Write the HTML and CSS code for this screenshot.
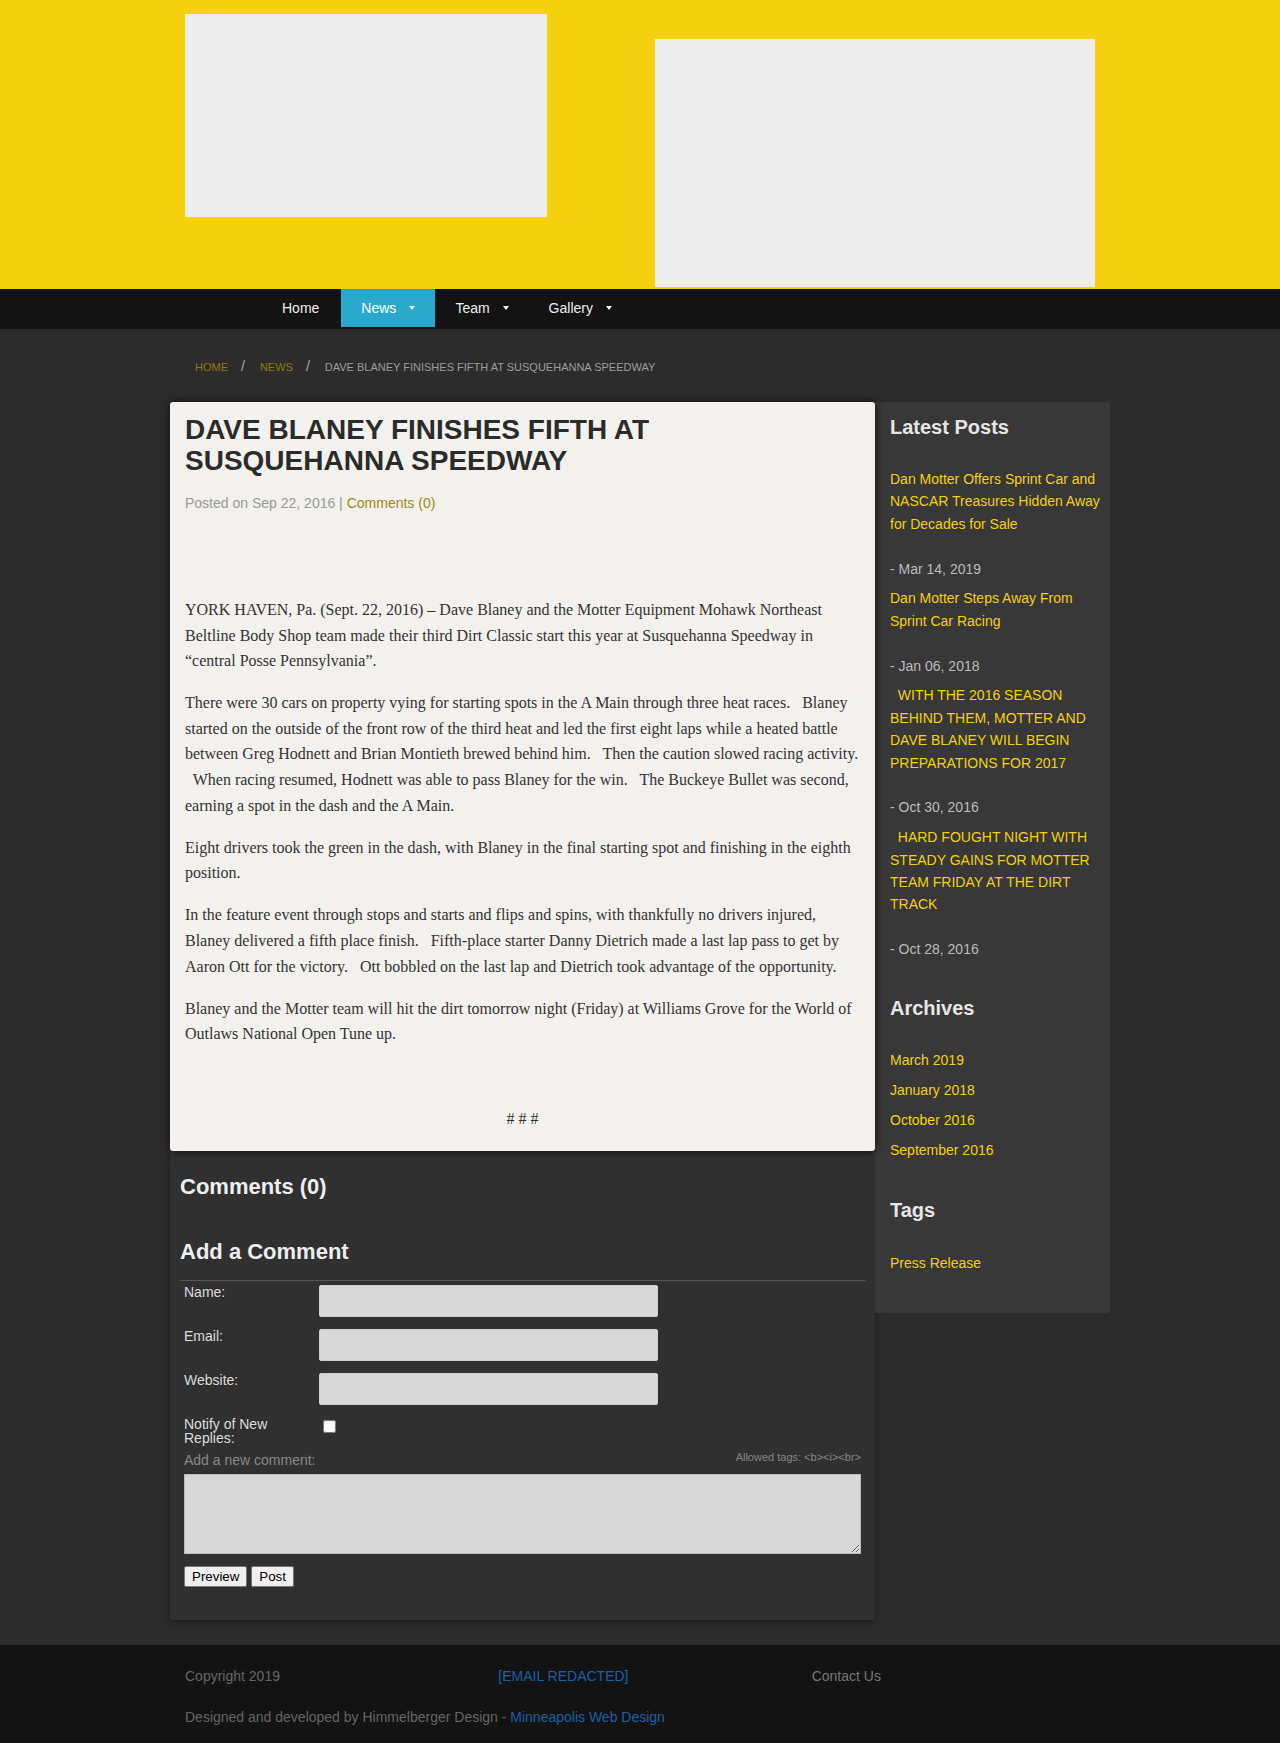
FILE: index.html
```html
<!DOCTYPE html>
<html lang="en">
<head>
<meta charset="utf-8">
<title>Dave Blaney Finishes Fifth at Susquehanna Speedway</title>
<link rel="stylesheet" href="styles.css">
</head>
<body>
<header class="site-header">
  <div class="container header-inner">
    <div class="logo-box"></div>
    <div class="banner-box"></div>
  </div>
</header>
<nav class="mainnav">
  <div class="container">
    <ul class="nav-list">
      <li><a href="#">Home</a></li>
      <li class="active"><a href="#">News<span class="caret"></span></a></li>
      <li><a href="#">Team<span class="caret"></span></a></li>
      <li><a href="#">Gallery<span class="caret"></span></a></li>
    </ul>
  </div>
</nav>
<div class="container crumbs">
  <a href="#">Home</a><span class="sep">/</span><a href="#">News</a><span class="sep">/</span><span class="current">Dave Blaney Finishes Fifth at Susquehanna Speedway</span>
</div>
<div class="container page-row">
  <main class="main-col">
    <article class="post-card">
      <h1 class="post-title">DAVE BLANEY FINISHES FIFTH AT SUSQUEHANNA SPEEDWAY</h1>
      <p class="post-meta">Posted on Sep 22, 2016 | <a href="#">Comments (0)</a></p>
      <div class="post-body">
        <p>YORK HAVEN, Pa. (Sept. 22, 2016) – Dave Blaney and the Motter Equipment Mohawk Northeast Beltline Body Shop team made their third Dirt Classic start this year at Susquehanna Speedway in “central Posse Pennsylvania”.</p>
        <p>There were 30 cars on property vying for starting spots in the A Main through three heat races. &nbsp; Blaney started on the outside of the front row of the third heat and led the first eight laps while a heated battle between Greg Hodnett and Brian Montieth brewed behind him. &nbsp; Then the caution slowed racing activity. &nbsp; When racing resumed, Hodnett was able to pass Blaney for the win. &nbsp; The Buckeye Bullet was second, earning a spot in the dash and the A Main.</p>
        <p>Eight drivers took the green in the dash, with Blaney in the final starting spot and finishing in the eighth position.</p>
        <p>In the feature event through stops and starts and flips and spins, with thankfully no drivers injured, Blaney delivered a fifth place finish. &nbsp; Fifth-place starter Danny Dietrich made a last lap pass to get by Aaron Ott for the victory. &nbsp; Ott bobbled on the last lap and Dietrich took advantage of the opportunity.</p>
        <p>Blaney and the Motter team will hit the dirt tomorrow night (Friday) at Williams Grove for the World of Outlaws National Open Tune up.</p>
        <p>&nbsp;</p>
        <p class="center"># # #</p>
      </div>
    </article>
    <section class="comments-box">
      <h3 class="comments-title">Comments (0)</h3>
      <h3 class="add-title">Add a Comment</h3>
      <hr class="form-rule">
      <table class="comment-form">
        <tr>
          <td class="lbl">Name:</td>
          <td><input type="text" class="field"></td>
        </tr>
        <tr>
          <td class="lbl">Email:</td>
          <td><input type="text" class="field"></td>
        </tr>
        <tr>
          <td class="lbl">Website:</td>
          <td><input type="text" class="field"></td>
        </tr>
        <tr>
          <td class="lbl">Notify of New Replies:</td>
          <td><input type="checkbox" class="check"></td>
        </tr>
        <tr>
          <td colspan="2" class="full">
            <span class="allowed">Allowed tags: &lt;b&gt;&lt;i&gt;&lt;br&gt;</span>
            <span class="new-lbl">Add a new comment:</span>
            <textarea class="comment-text"></textarea>
          </td>
        </tr>
        <tr>
          <td colspan="2" class="buttons">
            <button type="button" class="btn">Preview</button>
            <button type="button" class="btn">Post</button>
          </td>
        </tr>
      </table>
    </section>
  </main>
  <aside class="sidebar">
    <div class="widget">
      <h3 class="widget-title">Latest Posts</h3>
      <div class="post-item"><a href="#">Dan Motter Offers Sprint Car and NASCAR Treasures Hidden Away for Decades for Sale</a><br><br><span class="date">- Mar 14, 2019</span></div>
      <div class="post-item"><a href="#">Dan Motter Steps Away From Sprint Car Racing</a><br><br><span class="date">- Jan 06, 2018</span></div>
      <div class="post-item"><a href="#">&nbsp; WITH THE 2016 SEASON BEHIND THEM, MOTTER AND DAVE BLANEY WILL BEGIN PREPARATIONS FOR 2017</a><br><br><span class="date">- Oct 30, 2016</span></div>
      <div class="post-item"><a href="#">&nbsp; HARD FOUGHT NIGHT WITH STEADY GAINS FOR MOTTER TEAM FRIDAY AT THE DIRT TRACK</a><br><br><span class="date">- Oct 28, 2016</span></div>
    </div>
    <div class="widget">
      <h3 class="widget-title">Archives</h3>
      <div class="post-item"><a href="#">March 2019</a></div>
      <div class="post-item"><a href="#">January 2018</a></div>
      <div class="post-item"><a href="#">October 2016</a></div>
      <div class="post-item"><a href="#">September 2016</a></div>
    </div>
    <div class="widget widget-tags">
      <h3 class="widget-title">Tags</h3>
      <div class="post-item"><a href="#">Press Release</a></div>
    </div>
  </aside>
</div>
<footer class="site-footer">
  <div class="container footer-grid">
    <div class="fcol">Copyright 2019</div>
    <div class="fcol"><a href="#" class="flink">[EMAIL REDACTED]</a></div>
    <div class="fcol fcontact">Contact Us</div>
  </div>
  <div class="container footer-credit">
    Designed and developed by Himmelberger Design - <a href="#" class="flink">Minneapolis Web Design</a>
  </div>
</footer>
</body>
</html>
```

FILE: styles.css
```css
* { box-sizing: border-box; }

body {
  margin: 0;
  background: #2c2c2c;
  font-family: "Liberation Sans", Arial, sans-serif;
  font-size: 14px;
  color: #ddd;
}

a { text-decoration: none; }

.container {
  width: 940px;
  margin: 0 auto;
}

/* Header */
.site-header {
  background: #f6d10f;
  height: 289px;
}
.header-inner {
  display: flex;
  justify-content: space-between;
  padding: 0 15px;
}
.logo-box {
  margin-top: 14px;
  width: 362px;
  height: 203px;
  background: #ededed;
}
.banner-box {
  margin-top: 39px;
  width: 440px;
  height: 248px;
  background: #ededed;
}

/* Nav */
.mainnav {
  background: #131313;
  height: 40px;
}
.nav-list {
  list-style: none;
  margin: 0;
  padding: 0 0 0 92px;
  display: flex;
}
.nav-list a {
  display: flex;
  align-items: center;
  height: 38px;
  padding: 0 20px;
  color: #eee;
  font-size: 14px;
}
.nav-list li:first-child a { padding-right: 22px; }
.nav-list .active a { background: #29a7cc; color: #fff; }
.caret {
  display: inline-block;
  width: 0;
  height: 0;
  margin-left: 13px;
  border-left: 3.5px solid transparent;
  border-right: 3.5px solid transparent;
  border-top: 4px solid #fff;
}

/* Breadcrumbs */
.crumbs {
  padding: 29px 0 27px 25px;
  line-height: 16px;
  font-size: 11px;
  text-transform: uppercase;
}
.crumbs a { color: #8f7a10; }
.crumbs .sep {
  color: #aaa;
  font-size: 14px;
  padding: 0 15px 0 13px;
}
.crumbs .current { color: #9c9c9c; }

/* Layout */
.page-row {
  display: flex;
  align-items: flex-start;
}
.main-col { width: 705px; }
.sidebar {
  width: 235px;
  background: #383838;
  border-radius: 0 3px 3px 0;
  padding: 14px 10px 3px 15px;
}

/* Post card */
.post-card {
  position: relative;
  z-index: 1;
  background: #f2f1ed;
  border-radius: 3px;
  box-shadow: 0 0 8px rgba(0, 0, 0, 0.7);
  padding: 13px 15px 3px;
}
.post-title {
  margin: 0 0 17px;
  font-size: 28px;
  line-height: 30.5px;
  font-weight: bold;
  color: #2b2b2b;
}
.post-meta {
  margin: 0 0 84px;
  line-height: 20px;
  font-size: 14px;
  color: #999;
}
.post-meta a { color: #a08a12; }
.post-body p {
  margin: 0 0 16.5px;
  font-family: "Liberation Serif", "Times New Roman", serif;
  font-size: 16px;
  line-height: 25.6px;
  color: #333;
}
.post-body .center { text-align: center; }

/* Comments */
.comments-box {
  background: #303030;
  border-radius: 0 0 3px 3px;
  box-shadow: 0 2px 6px rgba(0, 0, 0, 0.35);
  padding: 0 10px 29px;
}
.comments-title,
.add-title {
  margin: 0;
  font-size: 22px;
  line-height: 22px;
  color: #eee;
}
.comments-title { padding-top: 25px; }
.add-title { margin-top: 43.7px; }
.form-rule {
  margin: 16.6px 0 0;
  border: 0;
  border-top: 1px solid #555;
  height: 0;
}
.comment-form {
  width: 100%;
  border-collapse: collapse;
}
.comment-form td {
  padding: 4px;
  vertical-align: top;
  font-size: 14px;
  line-height: 14px;
  color: #ddd;
}
.comment-form td.lbl { width: 135px; }
.field {
  display: block;
  width: 339px;
  height: 32px;
  margin: 0 0 4px;
  border: 1px solid #cfcfcf;
  border-radius: 2px;
  background: #d8d8d8;
}
.check {
  width: 13px;
  height: 13px;
  margin: 3px 3px 3px 4px;
}
.new-lbl { color: #888; }
.allowed {
  float: right;
  font-size: 11px;
  line-height: 8px;
  color: #888;
}
.comment-text {
  display: block;
  width: 677px;
  height: 80px;
  margin-top: 7px;
  border: 1px solid #bbb;
  background: #d8d8d8;
  resize: both;
}
.comment-form td.buttons { padding-top: 8px; }
.btn {
  font-family: "Liberation Sans", Arial, sans-serif;
  font-size: 13.333px;
  height: 21px;
  padding: 1px 7px;
  margin: 0;
  background: #efefef;
  color: #000;
  border: 1px solid #767676;
  border-radius: 2px;
}

/* Sidebar */
.widget { margin-bottom: 36.5px; }
.widget-tags { padding-top: 1px; }
.widget-title {
  margin: 0 0 30px;
  font-size: 20px;
  line-height: 22px;
  color: #e6e6e6;
}
.widget-tags .widget-title { margin-bottom: 31px; }
.post-item {
  margin-bottom: 7.4px;
  font-size: 14px;
  line-height: 22.4px;
}
.post-item a { color: #f2d20c; }
.post-item .date { color: #bbb; }

/* Footer */
.site-footer {
  margin-top: 25px;
  background: #131313;
  padding: 21px 0 17px;
  font-size: 14px;
  line-height: 20px;
  color: #666;
}
.footer-grid {
  display: grid;
  grid-template-columns: repeat(3, 1fr);
}
.fcol { padding: 0 15px; }
.fcontact { color: #777; }
.footer-credit {
  padding: 0 15px;
  margin-top: 20.7px;
}
.flink { color: #1f5fa3; }
```
